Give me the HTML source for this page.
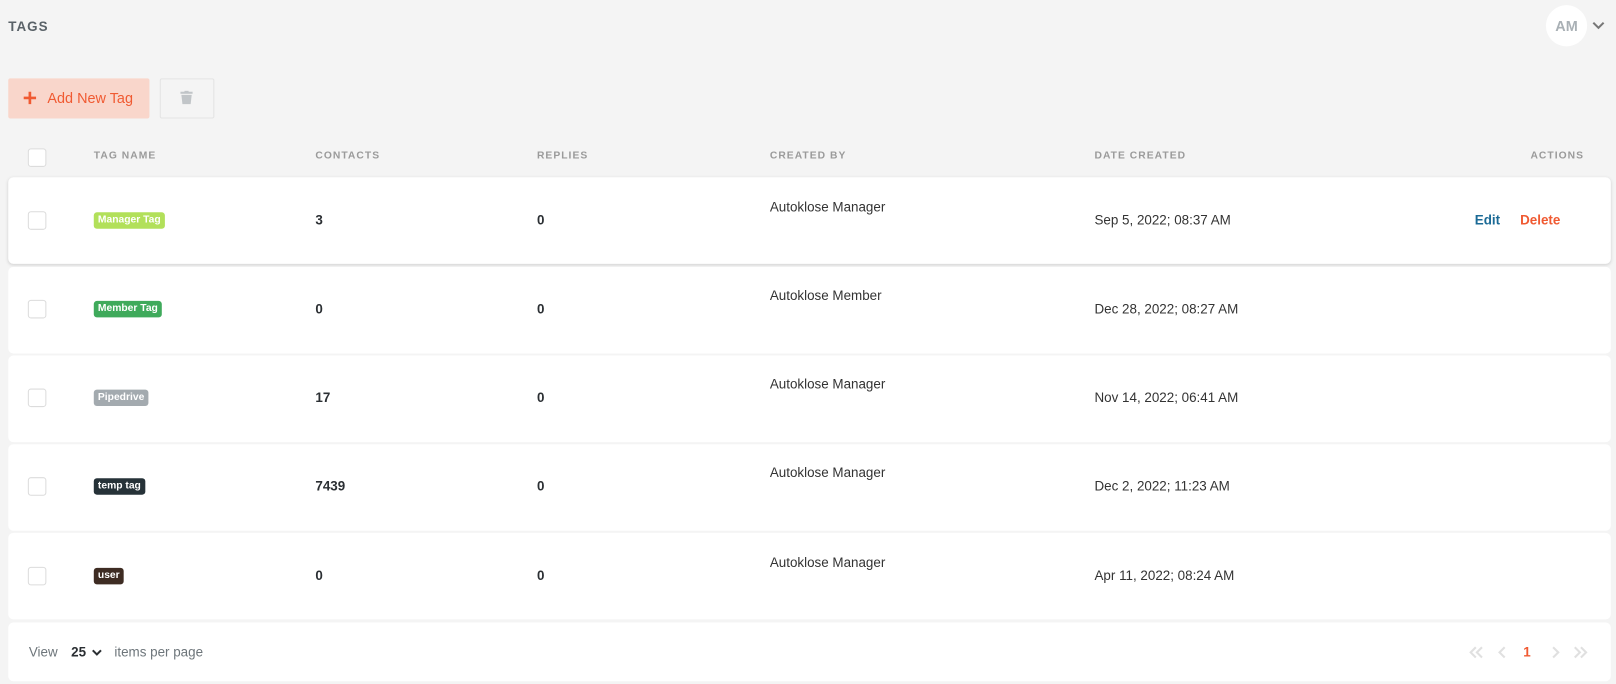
<!DOCTYPE html>
<html><head><style>
*{box-sizing:border-box;margin:0;padding:0}
html,body{width:1616px;height:684px;overflow:hidden;background:#f4f4f4}
#w{position:absolute;left:0;top:0;width:1568px;height:664px;transform:scale(1.0306);transform-origin:0 0;font-family:"Liberation Sans",Arial,sans-serif;color:#2b2f33}
.a{position:absolute}
.title{left:8px;top:18px;font-size:13px;font-weight:bold;letter-spacing:1px;color:#5a6268}
.av{left:1500px;top:5px;width:40px;height:40px;border-radius:50%;background:#fff;color:#a9b0b5;font-weight:bold;font-size:14px;text-align:center;line-height:40px}
.add{left:8px;top:76px;width:137px;height:39px;background:#f9d6cb;border-radius:2px;color:#f05a32;font-size:14px;line-height:39px;padding-left:38px}
.del{left:155px;top:76px;width:53px;height:39px;border:1px solid #e3e3e3;border-radius:2px}
.th{top:146px;font-size:10px;font-weight:bold;letter-spacing:1px;color:#9a9a9a}
.cb{width:18px;height:18px;border:1px solid #dcdcdc;border-radius:3px;background:#fff}
.card{left:8px;width:1555px;height:84px;background:#fff;border-radius:5px}
.tag{font-size:10px;font-weight:bold;color:#fff;padding:2px 4px;border-radius:3px;line-height:12px}
.n{font-size:13px;font-weight:bold}
.t{font-size:13px;color:#333}
</style></head><body><div id="w">
<div class="a title">TAGS</div>
<div class="a av">AM</div>
<svg class="a" style="left:1544px;top:20px" width="14" height="10"><path d="M2 2l5 5 5-5" stroke="#777" stroke-width="2" fill="none"/></svg>
<div class="a add">Add New Tag</div>
<svg class="a" style="left:22px;top:88px" width="14" height="14"><path d="M7 1v12M1 7h12" stroke="#f05a32" stroke-width="2.6"/></svg>
<div class="a del"></div>
<svg class="a" style="left:175px;top:88px" width="12" height="14"><rect x="0" y="1" width="12" height="2" fill="#c1c5c8"/><rect x="4" y="0" width="4" height="2" fill="#c1c5c8"/><path d="M1 4h10l-1 9H2z" fill="#c1c5c8"/></svg>
<div class="a cb" style="left:27px;top:144px"></div>
<div class="a th" style="left:91px">TAG NAME</div>
<div class="a th" style="left:306px">CONTACTS</div>
<div class="a th" style="left:521px">REPLIES</div>
<div class="a th" style="left:747px">CREATED BY</div>
<div class="a th" style="left:1062px">DATE CREATED</div>
<div class="a th" style="left:1485px">ACTIONS</div>

<div class="a card" style="top:172px;box-shadow:0 1px 3px rgba(0,0,0,.15)"></div>
<div class="a card" style="top:259px"></div>
<div class="a card" style="top:345px"></div>
<div class="a card" style="top:431px"></div>
<div class="a card" style="top:517px"></div>
<div class="a card" style="top:604px;height:57px"></div>

<div class="a cb" style="left:27px;top:205px"></div>
<div class="a tag" style="left:91px;top:206px;background:#b2e05a">Manager Tag</div>
<div class="a n" style="left:306px;top:206px">3</div>
<div class="a n" style="left:521px;top:206px">0</div>
<div class="a t" style="left:747px;top:193px">Autoklose Manager</div>
<div class="a t" style="left:1062px;top:206px">Sep 5, 2022; 08:37 AM</div>
<div class="a n" style="left:1431px;top:206px;color:#1b6a96">Edit</div>
<div class="a n" style="left:1475px;top:206px;color:#f05a32">Delete</div>

<div class="a cb" style="left:27px;top:291px"></div>
<div class="a tag" style="left:91px;top:292px;background:#3faa5b">Member Tag</div>
<div class="a n" style="left:306px;top:292px">0</div>
<div class="a n" style="left:521px;top:292px">0</div>
<div class="a t" style="left:747px;top:279px">Autoklose Member</div>
<div class="a t" style="left:1062px;top:292px">Dec 28, 2022; 08:27 AM</div>

<div class="a cb" style="left:27px;top:377px"></div>
<div class="a tag" style="left:91px;top:378px;background:#a3aaaf">Pipedrive</div>
<div class="a n" style="left:306px;top:378px">17</div>
<div class="a n" style="left:521px;top:378px">0</div>
<div class="a t" style="left:747px;top:365px">Autoklose Manager</div>
<div class="a t" style="left:1062px;top:378px">Nov 14, 2022; 06:41 AM</div>

<div class="a cb" style="left:27px;top:463px"></div>
<div class="a tag" style="left:91px;top:464px;background:#263238">temp tag</div>
<div class="a n" style="left:306px;top:464px">7439</div>
<div class="a n" style="left:521px;top:464px">0</div>
<div class="a t" style="left:747px;top:451px">Autoklose Manager</div>
<div class="a t" style="left:1062px;top:464px">Dec 2, 2022; 11:23 AM</div>

<div class="a cb" style="left:27px;top:550px"></div>
<div class="a tag" style="left:91px;top:551px;background:#3e2c23">user</div>
<div class="a n" style="left:306px;top:551px">0</div>
<div class="a n" style="left:521px;top:551px">0</div>
<div class="a t" style="left:747px;top:538px">Autoklose Manager</div>
<div class="a t" style="left:1062px;top:551px">Apr 11, 2022; 08:24 AM</div>

<div class="a t" style="left:28px;top:625px;color:#6d757a">View</div>
<div class="a n" style="left:69px;top:625px">25</div>
<svg class="a" style="left:89px;top:629px" width="10" height="8"><path d="M1 2l4 4 4-4" stroke="#2b2f33" stroke-width="2" fill="none"/></svg>
<div class="a t" style="left:111px;top:625px;color:#6d757a">items per page</div>
<svg class="a" style="left:1425px;top:626px" width="120" height="14" fill="none" stroke="#e0e0e0" stroke-width="2"><path d="M7 2l-5 5 5 5M13 2l-5 5 5 5M35 2l-5 5 5 5M82 2l5 5-5 5M103 2l5 5-5 5M109 2l5 5-5 5"/></svg>
<div class="a n" style="left:1478px;top:625px;color:#f05a32">1</div>
</div></body></html>
